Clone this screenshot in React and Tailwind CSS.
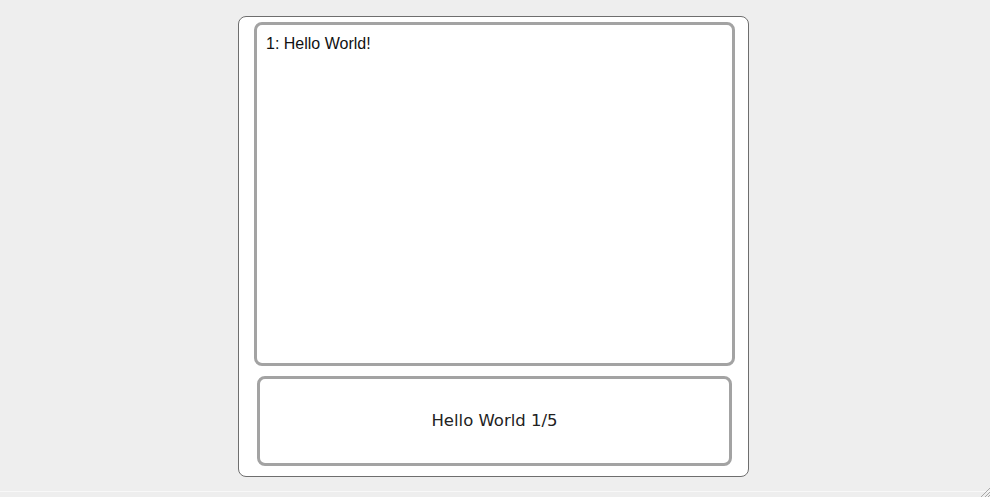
import React from "react";

function ResizeGrip() {
  return (
    <svg
      width="10"
      height="10"
      viewBox="0 0 10 10"
      className="absolute right-0 bottom-0"
    >
      <line x1="10" y1="1" x2="1" y2="10" stroke="#a8a8a8" strokeWidth="1" />
      <line x1="10" y1="5" x2="5" y2="10" stroke="#a8a8a8" strokeWidth="1" />
      <line x1="10" y1="8" x2="8" y2="10" stroke="#a8a8a8" strokeWidth="1" />
    </svg>
  );
}

export default function App() {
  return (
    <div className="relative h-[497px] w-full overflow-hidden bg-[#eeeeee]">
      <div className="h-[492px] border-b border-[#f8f8f8] pt-[16px]">
        <div className="ml-[238px] flex h-[461px] w-[511px] flex-col rounded-[8px] border border-[#6e6e6e] bg-white">
          <div className="ml-[15px] mt-[5px] h-[344px] w-[481px] rounded-[8px] border-[3px] border-[#a3a3a3] bg-white px-[9px] pt-[10px]">
            <p className="text-[16px] leading-[18px] text-[#111] [font-family:'Liberation_Sans',Arial,sans-serif]">
              1: Hello World!
            </p>
          </div>
          <div className="ml-[18px] mt-[10px] flex h-[90px] w-[475px] items-center justify-center rounded-[8px] border-[3px] border-[#a3a3a3] bg-white">
            <span className="text-[16.5px] text-[#222] [font-family:'DejaVu_Sans',Verdana,sans-serif]">
              Hello World 1/5
            </span>
          </div>
        </div>
      </div>
      <ResizeGrip />
    </div>
  );
}
